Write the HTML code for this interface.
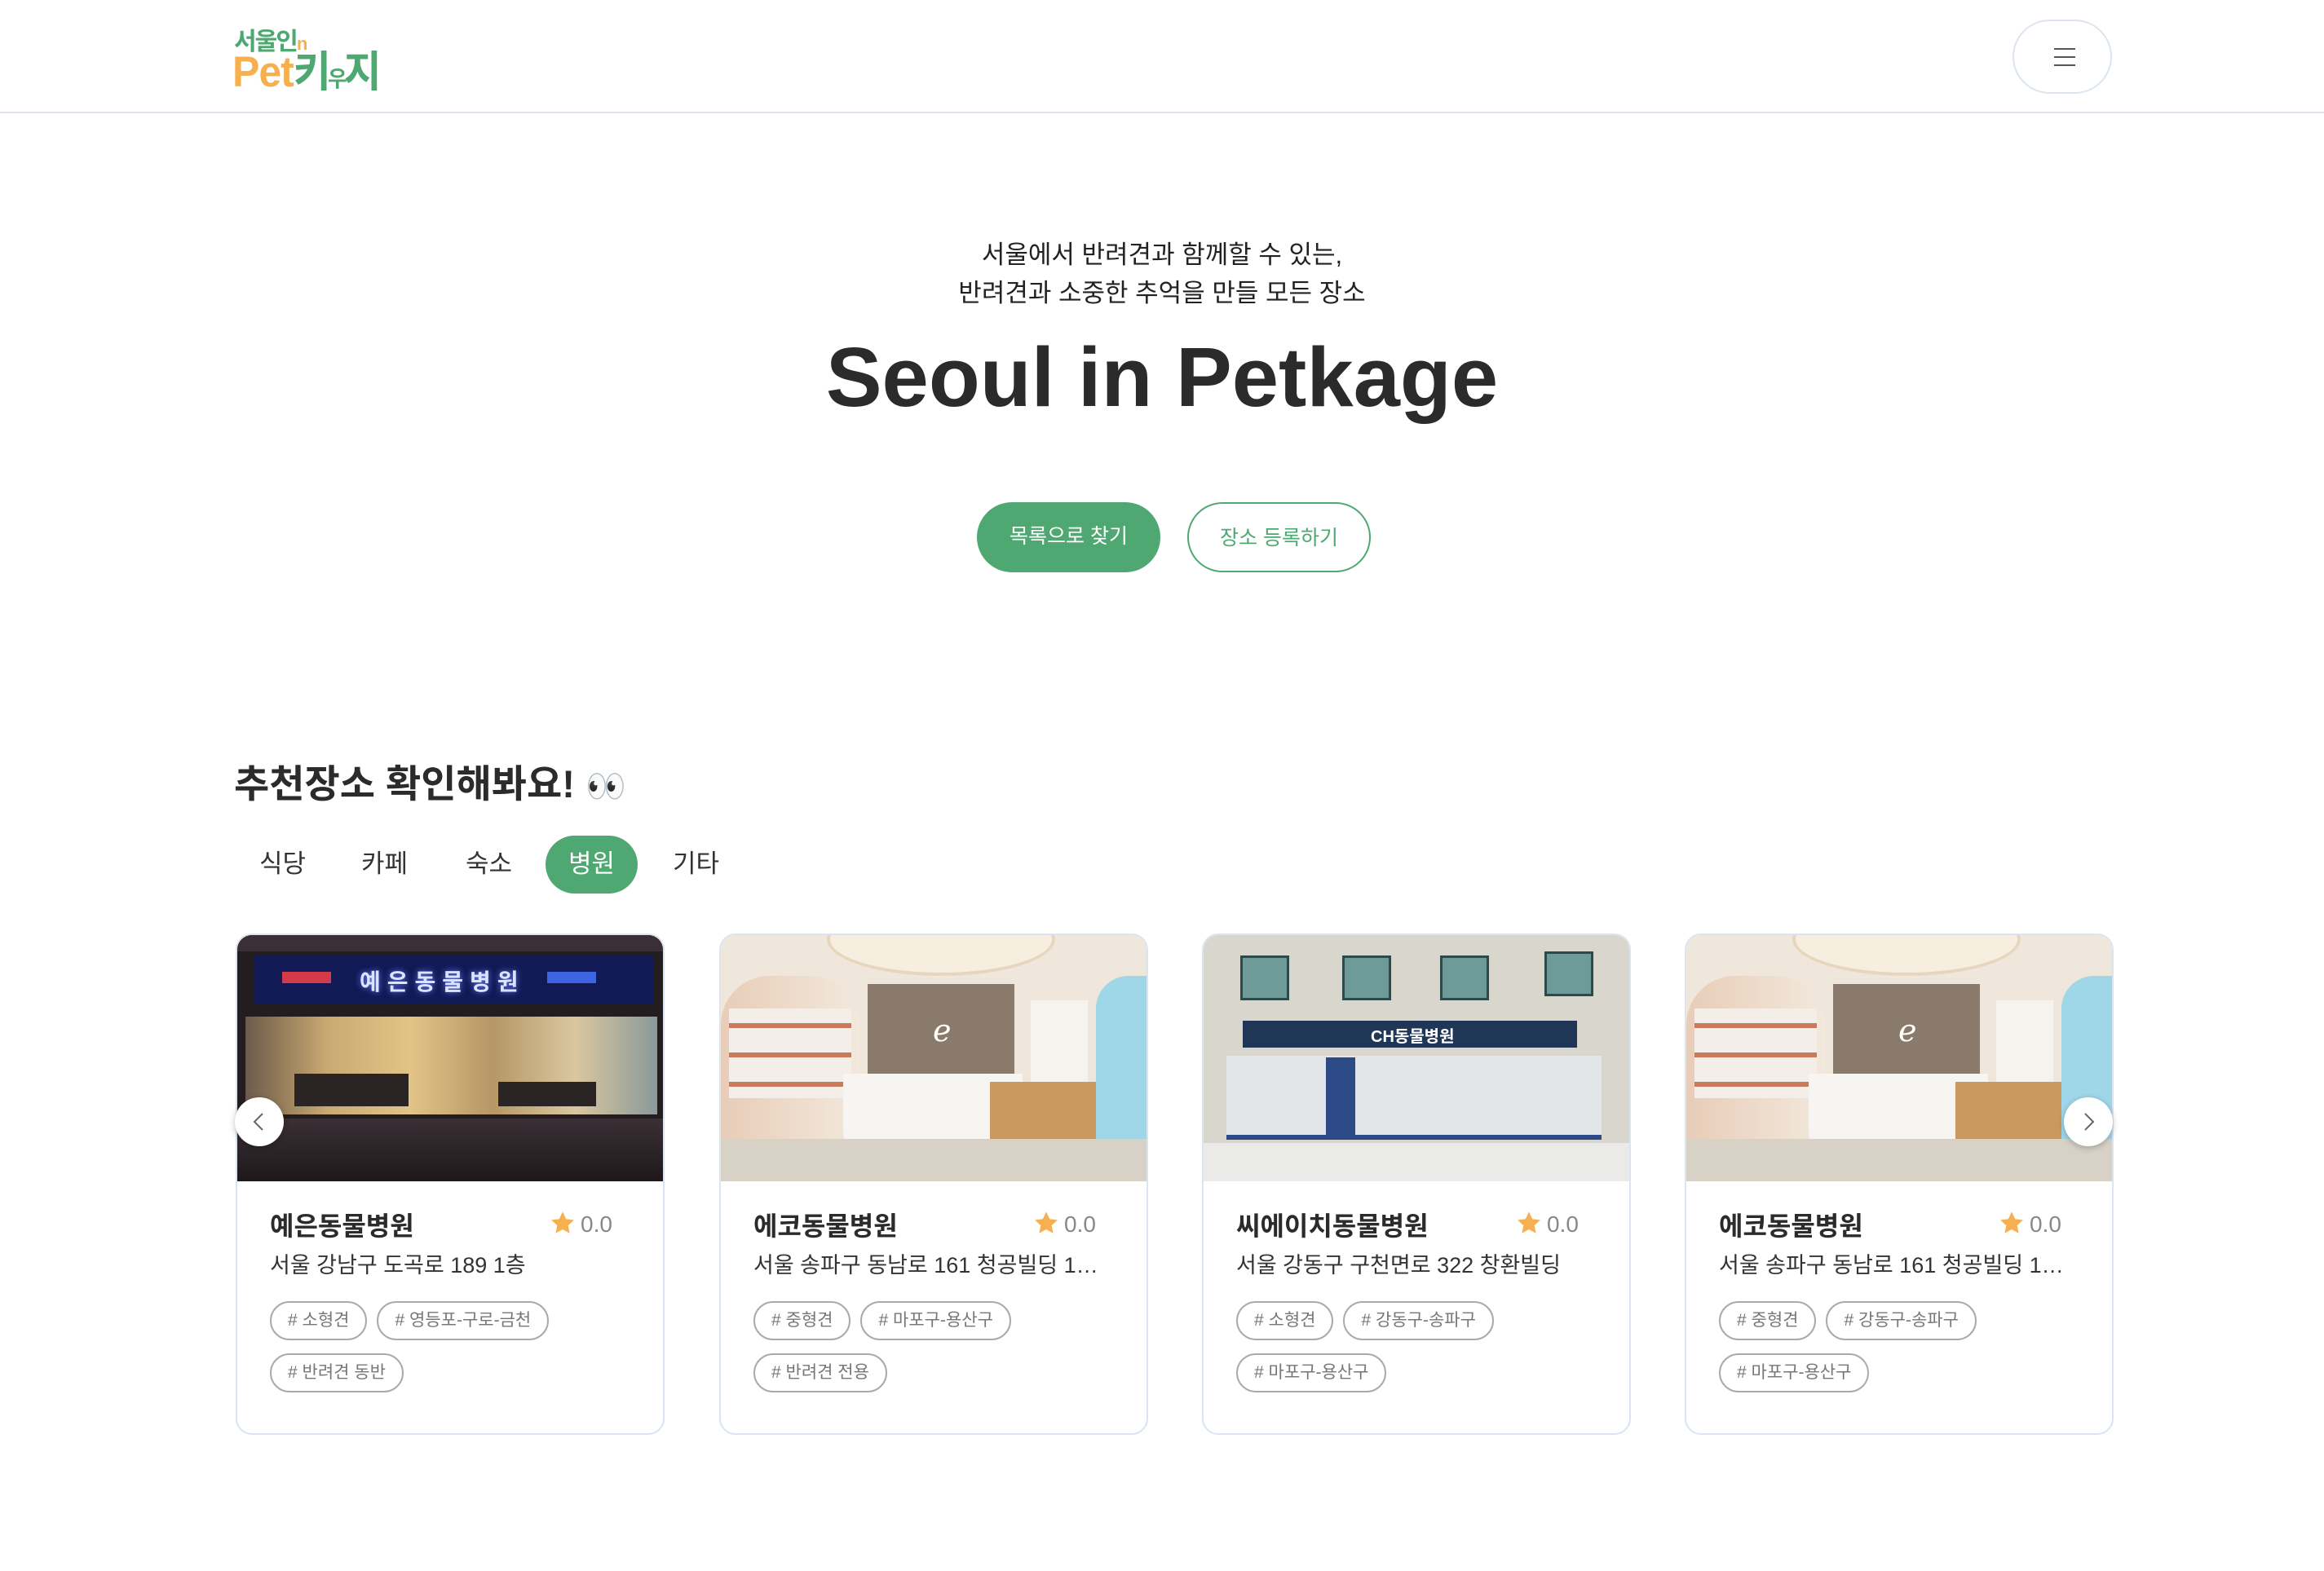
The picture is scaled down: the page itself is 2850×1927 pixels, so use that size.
<!DOCTYPE html>
<html><head><meta charset="utf-8">
<style>
*{margin:0;padding:0;box-sizing:border-box}
body{width:2850px;height:1927px;background:#fff;font-family:"Liberation Sans","Noto Sans CJK KR",sans-serif;color:#333;position:relative;overflow:hidden}
.abs{position:absolute}
header{position:absolute;left:0;top:0;width:2850px;height:139px;border-bottom:2px solid #dbe5ef}
.menu{left:2468px;top:24px;width:122px;height:91px;border:2px solid #dbe5ef;border-radius:46px}
.menu i{position:absolute;left:49px;width:26px;height:2px;background:#555}
.sub{left:0;width:2850px;text-align:center;font-size:31px;color:#222}
.title{left:0;width:2850px;top:404px;text-align:center;font-size:103px;font-weight:bold;color:#2b2b2b}
.btn{top:616px;height:86px;width:225px;border-radius:43px;font-size:25px;text-align:center;line-height:84px}
.h2{left:287px;top:923px;font-size:47px;font-weight:bold;color:#2b2b2b}
.tab{top:1034px;font-size:31px;color:#333}
.card{top:1145px;width:526px;height:615px;border:2px solid #dbe5ef;border-radius:20px;overflow:hidden;background:#fff}
.img{position:absolute;left:0;top:0;width:100%;height:302px;overflow:hidden}
.name{position:absolute;left:40px;top:332px;font-size:32px;font-weight:bold;color:#2b2b2b}
.rate{position:absolute;left:383px;top:338px;font-size:28px;color:#888}
.rate svg{vertical-align:-4px;margin-right:6px}
.addr{position:absolute;left:40px;top:383px;font-size:27px;color:#333;white-space:nowrap;width:450px;overflow:hidden;text-overflow:ellipsis}
.tags{position:absolute;left:40px;top:449px;width:460px}
.tag{display:inline-block;height:48px;line-height:44px;border:2px solid #aaa;border-radius:24px;padding:0 20px;font-size:21px;color:#777;margin:0 12px 16px 0}
.arrow{width:60px;height:60px;border-radius:30px;background:#fff;box-shadow:0 2px 8px rgba(0,0,0,.25);top:1346px}
</style></head><body>
<header>
 <div class="abs" style="left:287px;top:26px;font-size:30px;font-weight:bold;color:#4fa872;letter-spacing:-2px">서울인<span style="color:#f6b04f;font-size:22px">n</span></div>
 <div class="abs" style="left:285px;top:48px;font-size:50px;font-weight:bold;color:#f6b04f;letter-spacing:-1px;transform:scaleY(1.05)">Pet<span style="color:#4fa872;letter-spacing:-4px">키<span style="font-size:26px">우</span>지</span></div>
 <div class="abs menu"><i style="top:33px"></i><i style="top:43px"></i><i style="top:53px"></i></div>
</header>
<div class="abs sub" style="top:287px">서울에서 반려견과 함께할 수 있는,</div>
<div class="abs sub" style="top:334px">반려견과 소중한 추억을 만들 모든 장소</div>
<div class="abs title">Seoul in Petkage</div>
<div class="abs btn" style="left:1198px;background:#4fa872;color:#fff">목록으로 찾기</div>
<div class="abs btn" style="left:1456px;border:2px solid #4fa872;color:#4fa872">장소 등록하기</div>
<div class="abs h2">추천장소 확인해봐요! <span style="font-size:40px">👀</span></div>
<div class="abs tab" style="left:318px">식당</div>
<div class="abs tab" style="left:443px">카페</div>
<div class="abs tab" style="left:571px">숙소</div>
<div class="abs" style="left:669px;top:1025px;width:113px;height:71px;border-radius:36px;background:#4fa872"></div>
<div class="abs tab" style="left:697px;color:#fff">병원</div>
<div class="abs tab" style="left:825px">기타</div>

<div class="abs card" style="left:289px">
 <div class="img" style="background:#231d20">
  <div class="abs" style="left:0;top:0;width:525px;height:20px;background:#3a2f35"></div>
  <div class="abs" style="left:20px;top:25px;width:490px;height:60px;background:#111a55"></div>
  <div class="abs" style="left:55px;top:45px;width:60px;height:14px;background:#d53a4a"></div>
  <div class="abs" style="left:380px;top:45px;width:60px;height:14px;background:#3c63e0"></div>
  <div class="abs" style="left:150px;top:36px;font-size:28px;font-weight:bold;color:#d9e4ff;letter-spacing:8px;text-shadow:0 0 8px #6d7bff">예은동물병원</div>
  <div class="abs" style="left:10px;top:100px;width:505px;height:120px;background:linear-gradient(90deg,#6d5a4a,#c9aa72 20%,#e2c487 40%,#b69766 60%,#d9c7a0 80%,#8a9a9a)"></div>
  <div class="abs" style="left:70px;top:170px;width:140px;height:40px;background:#2a2424"></div>
  <div class="abs" style="left:320px;top:180px;width:120px;height:30px;background:#2a2424"></div>
  <div class="abs" style="left:0;top:225px;width:525px;height:77px;background:linear-gradient(#3a3035,#1e181b)"></div>
 </div>
 <div class="name">예은동물병원</div>
 <div class="rate"><svg width="32" height="30" viewBox="0 0 24 23"><path d="M12 1l3.2 6.9 7.5.9-5.6 5.1 1.5 7.4L12 17.6 5.4 21.3l1.5-7.4L1.3 8.8l7.5-.9z" fill="#f6b04f"/></svg>0.0</div>
 <div class="addr">서울 강남구 도곡로 189 1층</div>
 <div class="tags"><span class="tag"># 소형견</span><span class="tag"># 영등포-구로-금천</span><span class="tag"># 반려견 동반</span></div>
</div>

<div class="abs card" style="left:882px">
 <div class="img" style="background:#efe7dc">
  <div class="abs" style="left:130px;top:-40px;width:280px;height:90px;border-radius:50%;background:#f6eedf;border:4px solid #e6d6bd"></div>
  <div class="abs" style="left:0;top:50px;width:170px;height:200px;background:linear-gradient(90deg,#e8cdb8,#f2e8dc);border-radius:60px 60px 0 0"></div>
  <div class="abs" style="left:10px;top:90px;width:150px;height:110px;background:repeating-linear-gradient(#f3eee8 0 18px,#c97a5a 18px 24px,#f3eee8 24px 36px)"></div>
  <div class="abs" style="left:180px;top:60px;width:180px;height:150px;background:#8a7a6c"></div>
  <div class="abs" style="left:260px;top:95px;font-size:38px;color:#fff">ℯ</div>
  <div class="abs" style="left:380px;top:80px;width:70px;height:150px;background:#f6f3ee"></div>
  <div class="abs" style="left:460px;top:50px;width:65px;height:200px;background:#9fd6e8;border-radius:40px 0 0 0"></div>
  <div class="abs" style="left:150px;top:170px;width:220px;height:110px;background:#f7f5f1;border-radius:0 0 0 40px"></div>
  <div class="abs" style="left:330px;top:180px;width:130px;height:90px;background:#c9995f"></div>
  <div class="abs" style="left:0;top:250px;width:525px;height:52px;background:#d8d2c6"></div>
 </div>
 <div class="name">에코동물병원</div>
 <div class="rate"><svg width="32" height="30" viewBox="0 0 24 23"><path d="M12 1l3.2 6.9 7.5.9-5.6 5.1 1.5 7.4L12 17.6 5.4 21.3l1.5-7.4L1.3 8.8l7.5-.9z" fill="#f6b04f"/></svg>0.0</div>
 <div class="addr">서울 송파구 동남로 161 청공빌딩 1…</div>
 <div class="tags"><span class="tag"># 중형견</span><span class="tag"># 마포구-용산구</span><span class="tag"># 반려견 전용</span></div>
</div>

<div class="abs card" style="left:1474px">
 <div class="img" style="background:#d9d6ce">
  <div class="abs" style="left:45px;top:25px;width:60px;height:55px;background:#6f9a9a;border:3px solid #2d4a4a"></div>
  <div class="abs" style="left:170px;top:25px;width:60px;height:55px;background:#6f9a9a;border:3px solid #2d4a4a"></div>
  <div class="abs" style="left:290px;top:25px;width:60px;height:55px;background:#6f9a9a;border:3px solid #2d4a4a"></div>
  <div class="abs" style="left:418px;top:20px;width:60px;height:55px;background:#6f9a9a;border:3px solid #2d4a4a"></div>
  <div class="abs" style="left:48px;top:105px;width:410px;height:33px;background:#1f3656"></div>
  <div class="abs" style="left:205px;top:108px;font-size:20px;font-weight:bold;color:#fff">CH동물병원</div>
  <div class="abs" style="left:28px;top:148px;width:460px;height:102px;background:#e3e6e8"></div>
  <div class="abs" style="left:150px;top:150px;width:36px;height:100px;background:#2b4a86"></div>
  <div class="abs" style="left:28px;top:245px;width:460px;height:6px;background:#2b4a86"></div>
  <div class="abs" style="left:0;top:255px;width:525px;height:47px;background:#eaeae8"></div>
 </div>
 <div class="name">씨에이치동물병원</div>
 <div class="rate"><svg width="32" height="30" viewBox="0 0 24 23"><path d="M12 1l3.2 6.9 7.5.9-5.6 5.1 1.5 7.4L12 17.6 5.4 21.3l1.5-7.4L1.3 8.8l7.5-.9z" fill="#f6b04f"/></svg>0.0</div>
 <div class="addr">서울 강동구 구천면로 322 창환빌딩</div>
 <div class="tags"><span class="tag"># 소형견</span><span class="tag"># 강동구-송파구</span><span class="tag"># 마포구-용산구</span></div>
</div>

<div class="abs card" style="left:2066px">
 <div class="img" style="background:#efe7dc">
  <div class="abs" style="left:130px;top:-40px;width:280px;height:90px;border-radius:50%;background:#f6eedf;border:4px solid #e6d6bd"></div>
  <div class="abs" style="left:0;top:50px;width:170px;height:200px;background:linear-gradient(90deg,#e8cdb8,#f2e8dc);border-radius:60px 60px 0 0"></div>
  <div class="abs" style="left:10px;top:90px;width:150px;height:110px;background:repeating-linear-gradient(#f3eee8 0 18px,#c97a5a 18px 24px,#f3eee8 24px 36px)"></div>
  <div class="abs" style="left:180px;top:60px;width:180px;height:150px;background:#8a7a6c"></div>
  <div class="abs" style="left:260px;top:95px;font-size:38px;color:#fff">ℯ</div>
  <div class="abs" style="left:380px;top:80px;width:70px;height:150px;background:#f6f3ee"></div>
  <div class="abs" style="left:460px;top:50px;width:65px;height:200px;background:#9fd6e8;border-radius:40px 0 0 0"></div>
  <div class="abs" style="left:150px;top:170px;width:220px;height:110px;background:#f7f5f1;border-radius:0 0 0 40px"></div>
  <div class="abs" style="left:330px;top:180px;width:130px;height:90px;background:#c9995f"></div>
  <div class="abs" style="left:0;top:250px;width:525px;height:52px;background:#d8d2c6"></div>
 </div>
 <div class="name">에코동물병원</div>
 <div class="rate"><svg width="32" height="30" viewBox="0 0 24 23"><path d="M12 1l3.2 6.9 7.5.9-5.6 5.1 1.5 7.4L12 17.6 5.4 21.3l1.5-7.4L1.3 8.8l7.5-.9z" fill="#f6b04f"/></svg>0.0</div>
 <div class="addr">서울 송파구 동남로 161 청공빌딩 1…</div>
 <div class="tags"><span class="tag"># 중형견</span><span class="tag"># 강동구-송파구</span><span class="tag"># 마포구-용산구</span></div>
</div>

<div class="abs arrow" style="left:288px"><svg width="60" height="60"><path d="M34 20l-10 10 10 10" fill="none" stroke="#666" stroke-width="2"/></svg></div>
<div class="abs arrow" style="left:2531px"><svg width="60" height="60"><path d="M26 20l10 10-10 10" fill="none" stroke="#666" stroke-width="2"/></svg></div>
</body></html>
